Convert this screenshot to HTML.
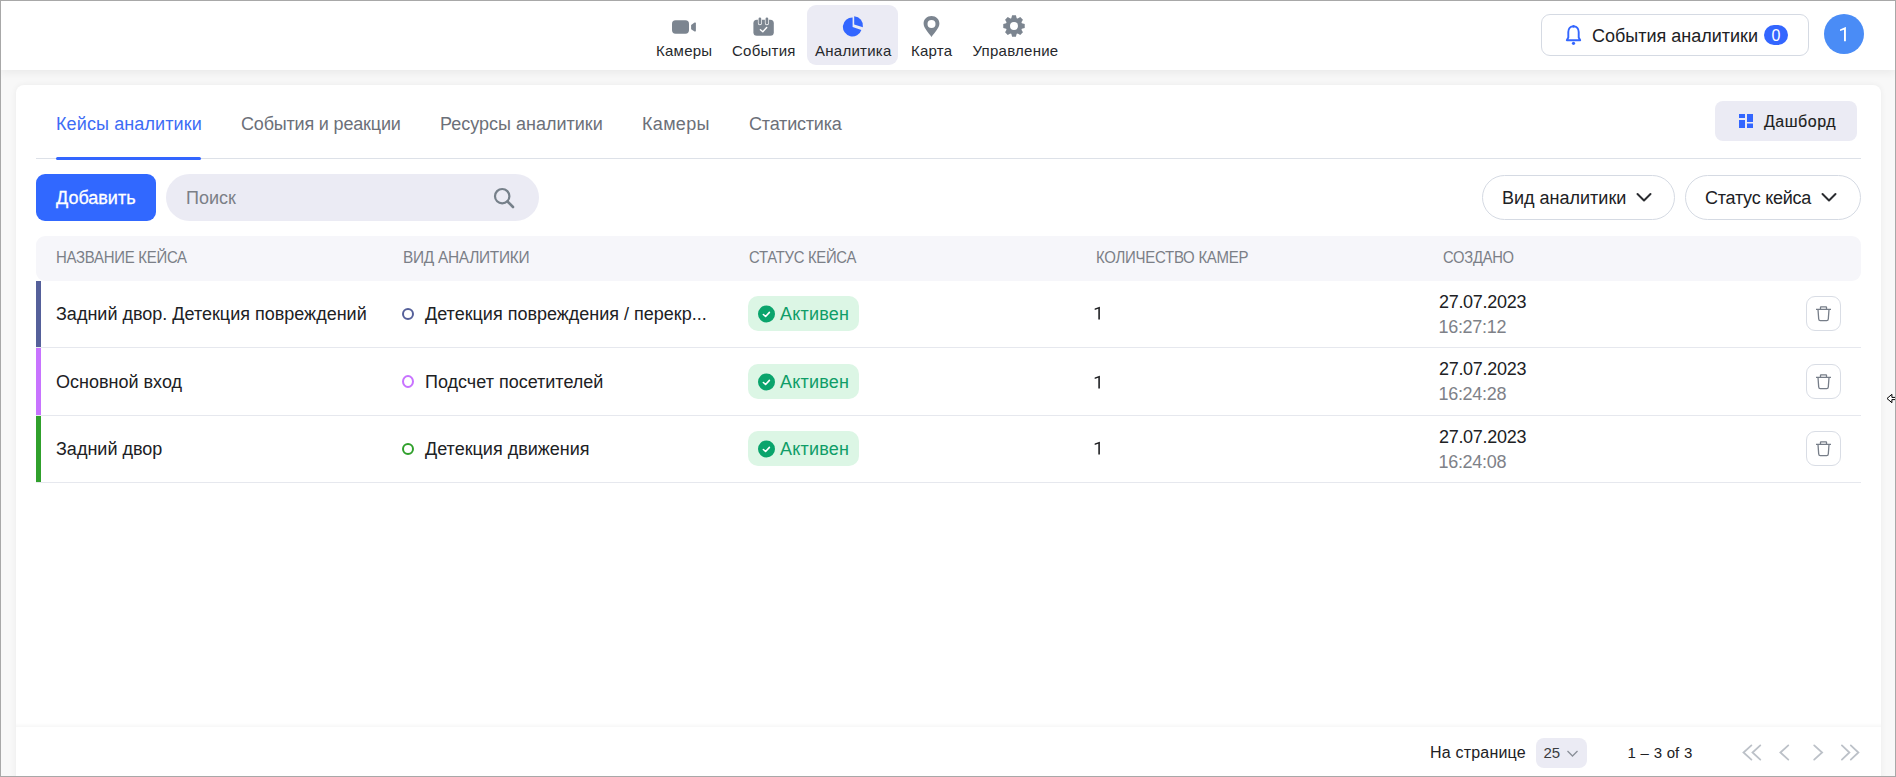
<!DOCTYPE html>
<html><head><meta charset="utf-8">
<style>
*{box-sizing:border-box;margin:0;padding:0}
html,body{width:1896px;height:777px;overflow:hidden;background:#f8f8f8}
body{position:relative;font-family:"Liberation Sans",sans-serif;color:#202124}
.a{position:absolute;white-space:nowrap}
.frame{position:absolute;left:0;top:0;width:1896px;height:777px;border:1px solid #a8a8a8;z-index:50;pointer-events:none}
.hdr{position:absolute;left:0;top:0;width:1896px;height:70px;background:#fff;box-shadow:0 2px 10px rgba(0,0,0,.07)}
.nav{font-size:15px;line-height:15px;color:#26282c;letter-spacing:0.25px}
.card{position:absolute;left:16px;top:85px;width:1865px;height:700px;background:#fff;border-radius:8px;box-shadow:0 0 6px rgba(0,0,0,.06)}
.tab{font-size:18px;line-height:18px;color:#6c7079}
.t18{font-size:18px;line-height:18px}
.th{font-size:16px;line-height:16px;color:#7b7f87;letter-spacing:-0.3px;transform:scaleX(0.93);transform-origin:0 0}
.sep{position:absolute;left:36px;width:1825px;height:1px;background:#e6e8ee}
.bar{position:absolute;left:36px;width:5px}
.dot{position:absolute;width:12px;height:12px;border-radius:50%;border:2px solid}
.badge{position:absolute;left:748px;width:111px;height:35px;border-radius:10px;background:#dcf6e5}
.del{position:absolute;left:1806px;width:35px;height:35px;border-radius:9px;border:1px solid #d9dde5;background:#fff}
</style></head>
<body>
<div class="hdr"></div>

<!-- nav active bg -->
<div class="a" style="left:807px;top:5px;width:91px;height:60px;border-radius:9px;background:#ebebf4"></div>

<!-- nav icons -->
<svg class="a" style="left:670px;top:18px" width="28" height="18" viewBox="0 0 28 18">
  <rect x="2" y="2.2" width="17" height="13.5" rx="3.6" fill="#7c8590"/>
  <path d="M21.1 6.9 L24.6 4.6 Q25.9 3.9 25.9 5.4 V12.6 Q25.9 14.1 24.6 13.4 L21.1 11.3 Z" fill="#7c8590"/>
</svg>
<svg class="a" style="left:751px;top:15px" width="24" height="23" viewBox="0 0 24 23">
  <rect x="2.4" y="4.7" width="20.4" height="16.1" rx="3.5" fill="#7c8590"/>
  <path d="M8.9 3.8 V8.2 M15.9 3.8 V8.2" stroke="#fff" stroke-width="4" stroke-linecap="round"/>
  <path d="M8.9 3.8 V8.1 M15.9 3.8 V8.1" stroke="#7c8590" stroke-width="2.7" stroke-linecap="round"/>
  <path d="M9.4 14.8 L11.8 16.8 L15.7 12.5" stroke="#fff" stroke-width="1.4" fill="none" stroke-linecap="round" stroke-linejoin="round"/>
</svg>
<svg class="a" style="left:842px;top:15px" width="23" height="23" viewBox="0 0 23 23">
  <path d="M10.6 2.4 V12.1 L19.4 14.9 A9.5 9.5 0 1 1 10.6 2.4 Z" fill="#3366ff"/>
  <path d="M12.2 1.2 A9.6 9.6 0 0 1 20.9 12.2 L12.2 9.6 Z" fill="#3366ff"/>
</svg>
<svg class="a" style="left:922px;top:15px" width="19" height="23" viewBox="0 0 19 23">
  <path d="M9.5 1 C5 1 1.6 4.3 1.6 8.6 C1.6 13 6.5 18 9.5 22 C12.5 18 17.4 13 17.4 8.6 C17.4 4.3 14 1 9.5 1 Z M9.5 4.9 A4 4 0 1 1 9.5 12.9 A4 4 0 1 1 9.5 4.9 Z" fill="#7c8590" fill-rule="evenodd"/>
</svg>
<svg class="a" style="left:1002px;top:14px" width="24" height="24" viewBox="0 0 24 24"><path fill="#7c8590" fill-rule="evenodd" d="M9.30 4.15 L10.10 1.27 L13.90 1.27 L14.70 4.15 A8.3 8.3 0 0 1 15.64 4.54 L18.25 3.07 L20.93 5.75 L19.46 8.36 A8.3 8.3 0 0 1 19.85 9.30 L22.73 10.10 L22.73 13.90 L19.85 14.70 A8.3 8.3 0 0 1 19.46 15.64 L20.93 18.25 L18.25 20.93 L15.64 19.46 A8.3 8.3 0 0 1 14.70 19.85 L13.90 22.73 L10.10 22.73 L9.30 19.85 A8.3 8.3 0 0 1 8.36 19.46 L5.75 20.93 L3.07 18.25 L4.54 15.64 A8.3 8.3 0 0 1 4.15 14.70 L1.27 13.90 L1.27 10.10 L4.15 9.30 A8.3 8.3 0 0 1 4.54 8.36 L3.07 5.75 L5.75 3.07 L8.36 4.54 A8.3 8.3 0 0 1 9.30 4.15 Z M12 8 A4 4 0 1 0 12 16 A4 4 0 1 0 12 8 Z"/></svg>

<div class="a nav" style="left:656px;top:43px">Камеры</div>
<div class="a nav" style="left:732px;top:43px">События</div>
<div class="a nav" style="left:815px;top:43px">Аналитика</div>
<div class="a nav" style="left:911px;top:43px">Карта</div>
<div class="a nav" style="left:972.5px;top:43px">Управление</div>

<!-- header right -->
<div class="a" style="left:1541px;top:14px;width:268px;height:42px;border:1px solid #d5dae3;border-radius:9px;background:#fff"></div>
<svg class="a" style="left:1564px;top:24px" width="19" height="22" viewBox="0 0 19 22">
  <path d="M9.5 2.3 C6.3 2.3 4.3 4.8 4.3 8 V13.5 L2.8 16.2 H16.2 L14.7 13.5 V8 C14.7 4.8 12.7 2.3 9.5 2.3 Z" fill="none" stroke="#3366ff" stroke-width="1.9" stroke-linejoin="round"/>
  <circle cx="9.5" cy="2.3" r="1.4" fill="#3366ff"/>
  <circle cx="9.5" cy="19.3" r="1.6" fill="#3366ff"/>
</svg>
<div class="a t18" style="left:1592px;top:27px;color:#202124">События аналитики</div>
<div class="a" style="left:1764px;top:25px;width:24px;height:20px;border-radius:10px;background:#3366ff;color:#fff;font-size:16px;line-height:21px;text-align:center">0</div>
<div class="a" style="left:1824px;top:14px;width:40px;height:40px;border-radius:50%;background:#4a8cf6"></div>
<svg class="a" style="left:1838px;top:26px" width="10" height="16" viewBox="0 0 10 16"><path d="M7.9 1 V15.3 H6 V3.7 L2 5.1 V3.4 L7.6 1 Z" fill="#fff"/></svg>

<!-- card -->
<div class="card"></div>

<!-- tabs -->
<div class="a tab" style="left:56px;top:115px;color:#3d6cf5;letter-spacing:0.11px">Кейсы аналитики</div>
<div class="a tab" style="left:241px;top:115px;letter-spacing:-0.18px">События и реакции</div>
<div class="a tab" style="left:440px;top:115px">Ресурсы аналитики</div>
<div class="a tab" style="left:642px;top:115px;letter-spacing:0.33px">Камеры</div>
<div class="a tab" style="left:749px;top:115px;letter-spacing:-0.19px">Статистика</div>
<div class="a" style="left:36px;top:158px;width:1825px;height:1px;background:#dde1e8"></div>
<div class="a" style="left:56px;top:157px;width:145px;height:3px;border-radius:2px;background:#3366ff"></div>

<!-- dashboard btn -->
<div class="a" style="left:1715px;top:101px;width:142px;height:40px;border-radius:8px;background:#ebebf4"></div>
<svg class="a" style="left:1739px;top:114px" width="14" height="14" viewBox="0 0 14 14">
  <rect x="0" y="0" width="6" height="4" fill="#3366ff"/>
  <rect x="0" y="6" width="6" height="8" fill="#3366ff"/>
  <rect x="8" y="0" width="6" height="8" fill="#3366ff"/>
  <rect x="8" y="9.5" width="6" height="4.5" fill="#3366ff"/>
</svg>
<div class="a" style="left:1764px;top:113.5px;font-size:16px;line-height:16px;letter-spacing:0.5px;color:#1c1d20;-webkit-text-stroke:0.12px #1c1d20">Дашборд</div>

<!-- toolbar -->
<div class="a" style="left:36px;top:174px;width:120px;height:47px;border-radius:9px;background:#3168ff"></div>
<div class="a t18" style="left:56px;top:189px;color:#fff;-webkit-text-stroke:0.3px #fff">Добавить</div>
<div class="a" style="left:166px;top:174px;width:373px;height:47px;border-radius:24px;background:#ebebf4"></div>
<div class="a t18" style="left:186px;top:189px;color:#7b7f87">Поиск</div>
<svg class="a" style="left:492px;top:186px" width="24" height="24" viewBox="0 0 24 24">
  <circle cx="10.2" cy="10.2" r="7.2" fill="none" stroke="#76808a" stroke-width="2.2"/>
  <path d="M15.5 15.5 L21 21" stroke="#76808a" stroke-width="2.6" stroke-linecap="round"/>
</svg>

<div class="a" style="left:1482px;top:175px;width:193px;height:45px;border:1px solid #d5dae3;border-radius:23px"></div>
<div class="a t18" style="left:1502px;top:189px">Вид аналитики</div>
<svg class="a" style="left:1635px;top:191px" width="18" height="12" viewBox="0 0 18 12"><path d="M2.5 3 L9 9.5 L15.5 3" fill="none" stroke="#2a2c30" stroke-width="2" stroke-linecap="round" stroke-linejoin="round"/></svg>
<div class="a" style="left:1685px;top:175px;width:176px;height:45px;border:1px solid #d5dae3;border-radius:23px"></div>
<div class="a t18" style="left:1705px;top:189px;letter-spacing:-0.25px">Статус кейса</div>
<svg class="a" style="left:1820px;top:191px" width="18" height="12" viewBox="0 0 18 12"><path d="M2.5 3 L9 9.5 L15.5 3" fill="none" stroke="#2a2c30" stroke-width="2" stroke-linecap="round" stroke-linejoin="round"/></svg>

<!-- table header -->
<div class="a" style="left:36px;top:236px;width:1825px;height:45px;border-radius:9px;background:#f6f6fa"></div>
<div class="a th" style="left:55.5px;top:250px;transform:scaleX(0.935)">НАЗВАНИЕ КЕЙСА</div>
<div class="a th" style="left:402.5px;top:250px;transform:scaleX(0.965)">ВИД АНАЛИТИКИ</div>
<div class="a th" style="left:748.5px;top:250px;transform:scaleX(0.928)">СТАТУС КЕЙСА</div>
<div class="a th" style="left:1095.5px;top:250px;transform:scaleX(0.937)">КОЛИЧЕСТВО КАМЕР</div>
<div class="a th" style="left:1442.5px;top:250px;transform:scaleX(0.923)">СОЗДАНО</div>

<!-- rows -->
<div class="bar" style="top:281px;height:66px;background:#55609a"></div>
<div class="bar" style="top:348px;height:67px;background:#c873ff"></div>
<div class="bar" style="top:416px;height:66px;background:#30a02c"></div>
<div class="sep" style="top:347px"></div>
<div class="sep" style="top:415px"></div>
<div class="sep" style="top:482px"></div>

<div class="a t18" style="left:56px;top:305px">Задний двор. Детекция повреждений</div>
<div class="a t18" style="left:56px;top:373px">Основной вход</div>
<div class="a t18" style="left:56px;top:440px">Задний двор</div>

<div class="dot" style="left:402px;top:308px;border-color:#55609a"></div>
<div class="dot" style="left:402px;top:375px;height:13px;border-color:#c873ff"></div>
<div class="dot" style="left:402px;top:443px;border-color:#30a02c"></div>
<div class="a t18" style="left:425px;top:305px">Детекция повреждения / перекр...</div>
<div class="a t18" style="left:425px;top:373px">Подсчет посетителей</div>
<div class="a t18" style="left:425px;top:440px">Детекция движения</div>

<div class="badge" style="top:296px"></div>
<div class="badge" style="top:364px"></div>
<div class="badge" style="top:431px"></div>
<svg class="a" style="left:758px;top:305px" width="17" height="18" viewBox="0 -0.5 17 18"><circle cx="8.5" cy="8.5" r="8.5" fill="#0aa46c"/><path d="M5.4 9 L7.6 11 L11.4 6.9" fill="none" stroke="#fff" stroke-width="1.6" stroke-linecap="round" stroke-linejoin="round"/></svg>
<svg class="a" style="left:758px;top:373px" width="17" height="18" viewBox="0 -0.5 17 18"><circle cx="8.5" cy="8.5" r="8.5" fill="#0aa46c"/><path d="M5.4 9 L7.6 11 L11.4 6.9" fill="none" stroke="#fff" stroke-width="1.6" stroke-linecap="round" stroke-linejoin="round"/></svg>
<svg class="a" style="left:758px;top:440px" width="17" height="18" viewBox="0 -0.5 17 18"><circle cx="8.5" cy="8.5" r="8.5" fill="#0aa46c"/><path d="M5.4 9 L7.6 11 L11.4 6.9" fill="none" stroke="#fff" stroke-width="1.6" stroke-linecap="round" stroke-linejoin="round"/></svg>
<div class="a t18" style="left:780px;top:305px;color:#0f9d68;letter-spacing:0.2px">Активен</div>
<div class="a t18" style="left:780px;top:373px;color:#0f9d68;letter-spacing:0.2px">Активен</div>
<div class="a t18" style="left:780px;top:440px;color:#0f9d68;letter-spacing:0.2px">Активен</div>

<svg class="a" style="left:1094px;top:306.2px" width="8" height="14" viewBox="0 0 8 14"><path d="M5.9 0.7 V13.6 H4.3 V2.8 L0.7 4.1 V2.6 L5.7 0.7 Z" fill="#202124"/></svg>
<svg class="a" style="left:1094px;top:374.5px" width="8" height="14" viewBox="0 0 8 14"><path d="M5.9 0.7 V13.6 H4.3 V2.8 L0.7 4.1 V2.6 L5.7 0.7 Z" fill="#202124"/></svg>
<svg class="a" style="left:1094px;top:441.2px" width="8" height="14" viewBox="0 0 8 14"><path d="M5.9 0.7 V13.6 H4.3 V2.8 L0.7 4.1 V2.6 L5.7 0.7 Z" fill="#202124"/></svg>

<div class="a t18" style="left:1439px;top:293px;letter-spacing:-0.3px">27.07.2023</div>
<div class="a t18" style="left:1438.5px;top:318px;color:#7e8188;letter-spacing:-0.3px">16:27:12</div>
<div class="a t18" style="left:1439px;top:360px;letter-spacing:-0.3px">27.07.2023</div>
<div class="a t18" style="left:1438.5px;top:385px;color:#7e8188;letter-spacing:-0.3px">16:24:28</div>
<div class="a t18" style="left:1439px;top:428px;letter-spacing:-0.3px">27.07.2023</div>
<div class="a t18" style="left:1438.5px;top:453px;color:#7e8188;letter-spacing:-0.3px">16:24:08</div>

<div class="del" style="top:296px"></div>
<div class="del" style="top:364px"></div>
<div class="del" style="top:431px"></div>
<svg class="a" style="left:1815px;top:305px" width="17" height="17" viewBox="0 0 17 17"><path d="M1 4.3 H16 M5.5 4 V2.3 Q5.5 1.8 6 1.8 H11 Q11.5 1.8 11.5 2.3 V4 M3 4.5 L3.7 14 Q3.8 15.6 5.3 15.6 H11.7 Q13.2 15.6 13.3 14 L14 4.5" fill="none" stroke="#767d88" stroke-width="1.3" stroke-linejoin="round"/></svg>
<svg class="a" style="left:1815px;top:373px" width="17" height="17" viewBox="0 0 17 17"><path d="M1 4.3 H16 M5.5 4 V2.3 Q5.5 1.8 6 1.8 H11 Q11.5 1.8 11.5 2.3 V4 M3 4.5 L3.7 14 Q3.8 15.6 5.3 15.6 H11.7 Q13.2 15.6 13.3 14 L14 4.5" fill="none" stroke="#767d88" stroke-width="1.3" stroke-linejoin="round"/></svg>
<svg class="a" style="left:1815px;top:440px" width="17" height="17" viewBox="0 0 17 17"><path d="M1 4.3 H16 M5.5 4 V2.3 Q5.5 1.8 6 1.8 H11 Q11.5 1.8 11.5 2.3 V4 M3 4.5 L3.7 14 Q3.8 15.6 5.3 15.6 H11.7 Q13.2 15.6 13.3 14 L14 4.5" fill="none" stroke="#767d88" stroke-width="1.3" stroke-linejoin="round"/></svg>

<!-- footer -->
<div class="a" style="left:16px;top:723px;width:1865px;height:4px;background:linear-gradient(rgba(0,0,0,0),rgba(0,0,0,.03))"></div>
<div class="a" style="left:1430px;top:745px;font-size:16px;line-height:16px;letter-spacing:0.2px">На странице</div>
<div class="a" style="left:1536px;top:738px;width:51px;height:30px;border-radius:8px;background:#ebebf4"></div>
<div class="a" style="left:1543.5px;top:745px;font-size:15px;line-height:15px;color:#3a3c40">25</div>
<svg class="a" style="left:1566px;top:749.3px" width="13" height="9" viewBox="0 0 13 9"><path d="M1.5 2 L6.5 7 L11.5 2" fill="none" stroke="#8a8f98" stroke-width="1.3"/></svg>
<div class="a" style="left:1627.5px;top:745px;font-size:15px;line-height:15px;letter-spacing:-0.1px;word-spacing:0.8px">1 – 3 of 3</div>
<svg class="a" style="left:1740px;top:743.4px" width="122" height="20" viewBox="0 0 122 20">
  <g fill="none" stroke="#bcc1c8" stroke-width="1.8" stroke-linecap="round" stroke-linejoin="miter">
    <path d="M11.4 2.4 L3.5 9.5 L11.4 16.6 M20.3 2.4 L12.5 9.5 L20.3 16.6"/>
    <path d="M48.3 2.4 L40.4 9.5 L48.3 16.6"/>
    <path d="M74.2 2.4 L82.1 9.5 L74.2 16.6"/>
    <path d="M101.9 2.4 L109.4 9.5 L101.9 16.6 M110.8 2.4 L118.4 9.5 L110.8 16.6"/>
  </g>
</svg>

<svg class="a" style="left:1885px;top:392px;z-index:40" width="11" height="13" viewBox="0 0 11 13"><path d="M2 6.5 L6.9 2.3 V5.4 H11 V7.6 H6.9 V10.7 Z" fill="#fff" stroke="#000" stroke-width="1" stroke-linejoin="round"/></svg>
<div class="frame"></div>
</body></html>
